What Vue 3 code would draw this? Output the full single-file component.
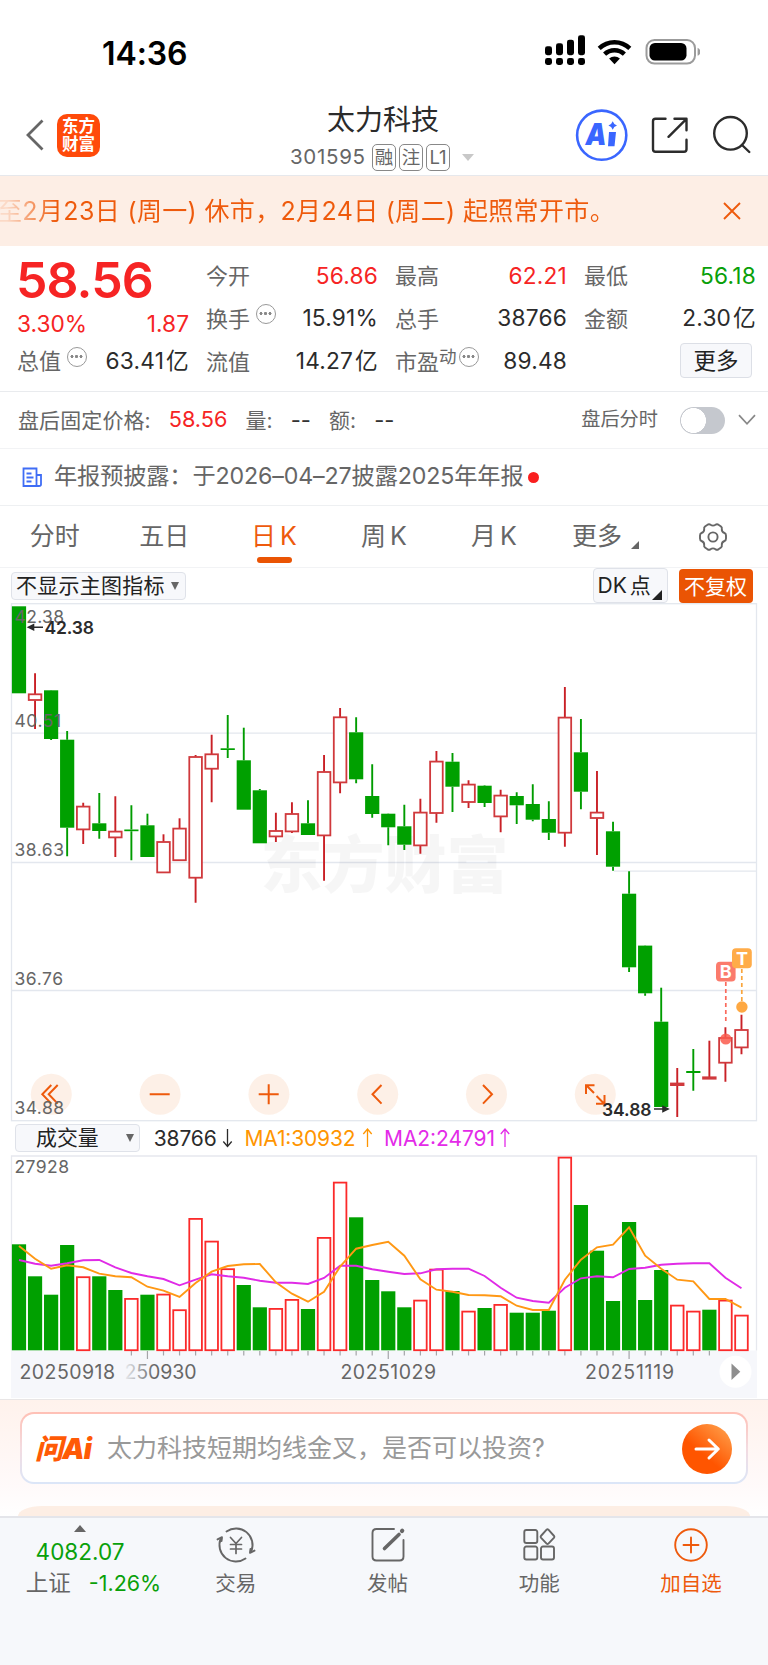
<template>
  <div class="page">
    <!-- Status bar -->
    <div class="status-bar">
      <span class="clock">14:36</span>
      <svg class="status-icons" width="160" height="40" viewBox="540 33 160 40">
        <g fill="#000">
          <rect v-for="(h, i) in [9, 12, 15.5, 20]" :key="'s' + i" :x="545 + i * 11" :y="59.6 - h - 4.4" width="7" :height="h" rx="2.4" />
          <rect v-for="i in 4" :key="'d' + i" :x="534 + i * 11" y="58" width="7" height="7" rx="2.4" />
          <path d="M614.5 64.2l-5.4-5.6a8 8 0 0 1 10.8 0z" />
        </g>
        <g fill="none" stroke="#000" stroke-width="4.4">
          <path d="M599.2 48.4a22 22 0 0 1 30.6 0" />
          <path d="M604.6 54.2a14.2 14.2 0 0 1 19.8 0" />
        </g>
        <rect x="646.5" y="40" width="48.5" height="23.6" rx="8" fill="none" stroke="#9b9b9b" stroke-width="2" />
        <rect x="649.5" y="43" width="37" height="17.6" rx="5.4" fill="#000" />
        <path d="M697.6 47.8q2.8 1.2 2.8 4t-2.8 4z" fill="#9b9b9b" />
      </svg>
    </div>

    <!-- Header -->
    <header class="header">
      <svg class="back" width="20" height="32" viewBox="0 0 20 32">
        <path d="M17.5 1.5L3 16l14.5 14.5" fill="none" stroke="#666" stroke-width="2.8" />
      </svg>
      <div class="app-logo"><span>东方</span><span>财富</span></div>
      <div class="stock">
        <div class="stock-name">太力科技</div>
        <div class="stock-code">
          <span class="code">301595</span>
          <span class="tag">融</span>
          <span class="tag">注</span>
          <span class="tag">L1</span>
          <i class="drop"></i>
        </div>
      </div>
      <svg class="header-icons" width="192" height="60" viewBox="570 105 192 60" fill="none">
        <circle cx="601.7" cy="135.2" r="24.6" stroke="#3a66ff" stroke-width="2.6" />
        <text x="585.5" y="145" class="ai-mark" textLength="21" lengthAdjust="spacingAndGlyphs">A</text>
        <path d="M609 132h7l-1.500 14.200h-6.500zM612.700 121.300q1 3.200 4.300 4.200-3.300 1-4.300 4.200-1-3.200-4.300-4.200 3.300-1 4.300-4.200z" fill="#3a66ff" />
        <g stroke="#2c2c2c" stroke-width="2.400" stroke-linecap="round" stroke-linejoin="round">
          <path d="M665.5 118.800h-10q-2.500 0-2.500 2.500v28q0 2.500 2.500 2.500h28.500q2.500 0 2.500-2.500v-9.500" />
          <path d="M674.5 118.800h12v11.500M686 119.300l-17.500 17.500" />
          <circle cx="730.5" cy="133.3" r="16.3" />
          <path d="M742 145l7.300 7" />
        </g>
      </svg>
    </header>

    <!-- Scrolling notice -->
    <div class="notice">
      <span class="notice-text">至2月23日 (周一) 休市，2月24日 (周二) 起照常开市。</span>
      <svg class="notice-close" width="18" height="18" viewBox="0 0 18 18">
        <path d="M1 1l16 16M17 1L1 17" stroke="#ee5a0c" stroke-width="1.9" />
      </svg>
    </div>

    <!-- Quote -->
    <section class="quote">
      <div class="quote-col first">
        <div class="price red">58.56</div>
        <div class="cell change red"><span>3.30%</span><span>1.87</span></div>
        <div class="cell">
          <span class="label">总值<i class="dots"></i></span><span class="value">63.41<em>亿</em></span>
        </div>
      </div>
      <div v-for="(col, i) in quoteCols" :key="i" class="quote-col">
        <div v-for="item in col" :key="item.label" class="cell">
          <span class="label">{{ item.label }}<sup v-if="item.sup">{{ item.sup }}</sup><i v-if="item.info" class="dots" :class="{ tight: item.sup }"></i></span>
          <span class="value" :class="item.color">{{ item.value }}<em v-if="item.unit">{{ item.unit }}</em></span>
        </div>
        <div v-if="i === 2" class="cell more-cell"><button class="more-btn">更多</button></div>
      </div>
    </section>

    <!-- After-hours -->
    <div class="after-hours">
      <span class="ah-label">盘后固定价格:</span>
      <span class="ah-price red">58.56</span>
      <span class="ah-label">量:</span>
      <span class="ah-dash">--</span>
      <span class="ah-label">额:</span>
      <span class="ah-dash">--</span>
      <span class="ah-min">盘后分时</span>
      <span class="toggle"></span>
      <svg width="18" height="12" viewBox="0 0 18 12">
        <path d="M1 1.200l8 8.600 8-8.600" fill="none" stroke="#888" stroke-width="1.7" />
      </svg>
    </div>

    <div class="news">
      <svg width="21" height="21" viewBox="0 0 21 21" fill="none" stroke="#3f6df5" stroke-width="1.8">
        <path d="M1.500 1.500h13v17.500h-13zM14.500 8h4.500v9.500q0 1.500-2 1.500h-4M4.500 6.500h5M4.500 10.500h7M4.500 14.500h5" />
      </svg>
      <span class="news-text">年报预披露：于2026–04–27披露2025年年报</span>
      <i class="red-dot"></i>
    </div>

    <!-- Period tabs -->
    <nav class="tabs">
      <span v-for="tab in tabs" :key="tab.text" class="tab" :class="{ active: tab.active }">
        {{ tab.text }}<b v-if="tab.letter">{{ tab.letter }}</b><i v-if="tab.corner" class="corner"></i>
      </span>
      <svg class="gear" width="30" height="30" viewBox="-15 -15 30 30" fill="none" stroke="#666" stroke-width="1.9" stroke-linejoin="round">
        <path d="M-5.500-12.200Q-4-13.500-2.500-12.200Q0-10.500 2.500-12.200Q4-13.500 5.500-12.200L8-10.500Q9.200-9.500 8.800-8Q8.600-5 11.500-4Q13-3.500 13-1.500V1.500Q13 3.500 11.500 4Q8.600 5 8.800 8Q9.200 9.500 8 10.500L5.500 12.200Q4 13.500 2.500 12.200Q0 10.500-2.500 12.200Q-4 13.500-5.500 12.200L-8 10.500Q-9.200 9.500-8.800 8Q-8.600 5-11.500 4Q-13 3.500-13 1.500V-1.500Q-13-3.500-11.500-4Q-8.600-5-8.800-8Q-9.200-9.500-8-10.500Z" />
        <circle r="4.6" />
      </svg>
    </nav>

    <!-- Chart toolbar -->
    <div class="toolbar">
      <div class="select main-select">不显示主图指标<i class="caret"></i></div>
      <div class="select dk">DK<span>点</span><i class="corner dark"></i></div>
      <div class="adjust">不复权</div>
    </div>

    <!-- K line chart -->
    <svg class="kline" width="768" height="519" viewBox="0 603 768 519">
      <g fill="none" stroke="#e3e7ee" stroke-width="1.3">
        <rect x="11.5" y="603.7" width="745" height="517" />
        <path d="M11.500 733.200H756.500M11.500 862.500H756.500M11.500 990.500H756.500M614 871.200H756.500" />
      </g>
      <text x="260.5" y="887.5" class="watermark" textLength="248">东方财富</text>
      <g v-for="(c, i) in candles" :key="i">
        <path :d="`M${barX(i)} ${c[1]}V${c[2]}M${barX(i)} ${c[3]}V${c[4]}`" :stroke="c[0] ? '#c92026' : '#009c00'" stroke-width="1.9" />
        <rect v-if="c[0]" :x="barX(i) - 6.3" :y="c[2] + 0.3" width="12.6" :height="Math.max(c[3] - c[2] - 0.6, 1)" fill="#fff" stroke="#d0393c" stroke-width="1.8" />
        <rect v-else :x="barX(i) - 7.1" :y="c[2]" width="14.2" :height="Math.max(c[3] - c[2], 1.7)" fill="#00a000" />
      </g>

      <!-- Chart controls -->
      <g v-for="n in 6" :key="'c' + n">
        <circle :cx="51.3 + (n - 1) * 108.8" cy="1094.3" r="20.5" fill="#fdeee4" fill-opacity="0.9" />
      </g>
      <g fill="none" stroke="#ee5a0c" stroke-width="2">
        <path d="M51.300 1085l-9 9.300 9 9.300M57.700 1085l-9 9.300 9 9.300" />
        <path d="M149.700 1094.300h20M258.700 1094.300h20M268.700 1084.300v20" />
        <path d="M381.500 1085l-9 9.300 9 9.300M483 1085l9 9.300-9 9.300" />
        <path d="M594 1093l-7.500-7.500M586 1094v-8.800h8.500M596.500 1096l7.500 7.500M604.500 1095v8.800h-8.500" />
      </g>

      <g class="axis-label">
        <text x="14.5" y="623.2" textLength="49.5">42.38</text>
        <text x="14.5" y="727.3" textLength="46.5">40.51</text>
        <text x="14.5" y="856.3" textLength="49.5">38.63</text>
        <text x="14.5" y="985.4" textLength="48.5">36.76</text>
        <text x="14.500" y="1114.2" textLength="49.5">34.88</text>
      </g>
      <g class="extreme">
        <text x="44.5" y="634" textLength="49.5">42.38</text>
        <text x="602" y="1116.3" textLength="49.5">34.88</text>
      </g>
      <g stroke="#2b2b2b" stroke-width="1.600" fill="#2b2b2b">
        <path d="M32 627.300H43M654 1109H664" />
        <path d="M28.500 627.300l5-2.500v5zM668 1109l-5-2.500v5z" />
      </g>

      <!-- Signals -->
      <g fill="none" stroke-width="1.700" stroke-dasharray="4 3">
        <path d="M725.800 982V1021" stroke="#fa6a5c" />
        <path d="M741.800 969V1002" stroke="#f9a53c" />
      </g>
      <circle cx="725.8" cy="1039" r="5.6" fill="#fa5a4c" fill-opacity="0.85" />
      <circle cx="741.9" cy="1007" r="5.7" fill="#fea842" />
      <rect x="716" y="961.8" width="19.6" height="19.6" rx="4" fill="#fb7b6c" />
      <rect x="732" y="948.3" width="19.8" height="20" rx="4" fill="#ffac49" />
      <text x="725.8" y="978.3" class="flag">B</text>
      <text x="742" y="965" class="flag">T</text>
    </svg>

    <!-- Indicator row -->
    <div class="indicator">
      <div class="select vol-select">成交量<i class="caret"></i></div>
      <svg width="370" height="32" viewBox="150 1123 370 32" class="ind-values">
        <text x="153.7" y="1147" fill="#2b2b2b" textLength="63">38766</text>
        <text x="244.5" y="1147" fill="#ff9500" textLength="111">MA1:30932</text>
        <text x="384" y="1147" fill="#e32be8" textLength="111">MA2:24791</text>
        <g fill="none" stroke-width="1.3">
          <path d="M227.500 1130v17M223.300 1142.500l4.200 5 4.200-5" stroke="#2b2b2b" />
          <path d="M367.500 1148v-17.500M363.300 1135l4.200-5 4.200 5" stroke="#ff9500" />
          <path d="M505 1148v-17.500M500.800 1135l4.200-5 4.200 5" stroke="#e32be8" />
        </g>
      </svg>
    </div>

    <!-- Volume chart -->
    <svg class="volume" width="768" height="243" viewBox="0 1155 768 243">
      <rect x="11" y="1350.5" width="746" height="48" fill="#f6f7fb" />
      <path d="M11.500 1350.500V1156H756.500V1350.500" fill="none" stroke="#e6e8ee" stroke-width="1.3" />
      <text x="14.5" y="1173.3" class="axis-label" textLength="54.5">27928</text>
      <g v-for="(top, i) in volumes" :key="i">
        <rect v-if="isUp(i)" :x="barX(i) - 6.3" :y="top + 0.9" width="12.6" :height="1349.3 - top" fill="#fff" stroke="#fb2a2a" stroke-width="1.8" />
        <rect v-else :x="barX(i) - 7.1" :y="top" width="14.2" :height="1350.3 - top" fill="#00a000" />
      </g>
      <polyline :points="linePoints(ma2)" fill="none" stroke="#e02be6" stroke-width="1.9" />
      <polyline :points="linePoints(ma1)" fill="none" stroke="#ff9814" stroke-width="1.9" />
      <path v-for="i in 37" :key="'t' + i" :d="`M${barX(i + 6)} 1351v${majors.includes(i + 6) ? 8 : 4.5}`" stroke="#a4a4a8" stroke-width="1.2" />
      <defs>
        <linearGradient id="dateFade" gradientUnits="userSpaceOnUse" x1="124" x2="154" y1="0" y2="0">
          <stop offset="0" stop-color="#666" stop-opacity="0.050" />
          <stop offset="1" stop-color="#666" />
        </linearGradient>
      </defs>
      <g class="date">
        <text x="19.5" y="1378.6" textLength="95.5">20250918</text>
        <text x="124.5" y="1378.6" textLength="72" fill="url(#dateFade)">250930</text>
        <text x="340.5" y="1378.6" textLength="95.5">20251029</text>
        <text x="585" y="1378.6" textLength="89">20251119</text>
      </g>
      <circle cx="735.5" cy="1371.7" r="16" fill="#fff" />
      <path d="M731.500 1363.500v16.400l8.800-8.200z" fill="#8e8e8e" />
    </svg>

    <!-- Ask AI -->
    <section class="ask">
      <div class="ask-box">
        <span class="ask-logo">问Ai</span>
        <span class="ask-text">太力科技短期均线金叉，是否可以投资?</span>
        <span class="ask-go">
          <svg width="28" height="24" viewBox="0 0 28 24" fill="none" stroke="#fff" stroke-width="3" stroke-linecap="round" stroke-linejoin="round">
            <path d="M3 12h22M16 3l9.300 9-9.300 9" />
          </svg>
        </span>
      </div>
      <div class="peek"></div>
    </section>

    <!-- Bottom bar -->
    <footer class="bottom">
      <div class="index">
        <i class="up"></i>
        <div class="index-value">4082.07</div>
        <div class="index-row"><span>上证</span><span class="index-pct">-1.26%</span></div>
      </div>
      <div class="action">
        <svg width="40" height="36" viewBox="-20 -18 40 36" fill="none" stroke="#666" stroke-width="1.9" stroke-linecap="round" stroke-linejoin="round">
          <path d="M-9.500-13.500A16.500 16.500 0 0 1 15.200 6.500M9.500 13.500A16.500 16.500 0 0 1-15.200-6.500" />
          <path d="M14 7.800l4.500-2.200M-14-7.800l-4.500 2.200M14 7.500l.500-3.500M-14-7.500l-.500 3.500" />
          <path d="M-5.500-7.500L0-1.500l5.500-6M0-1.500V8.500M-5.500-.500h11M-5.500 4h11" stroke-width="1.7" />
        </svg>
        <span>交易</span>
      </div>
      <div class="action">
        <svg width="40" height="36" viewBox="-20 -18 40 36" fill="none" stroke="#666" stroke-width="1.9" stroke-linecap="round">
          <path d="M6-16h-17.500q-4 0-4 4V11.500q0 4 4 4H11.500q4 0 4-4V-5" />
          <path d="M-3.500 3.500L11-10.500" stroke-width="3.6" />
          <path d="M14-14l.200-.200" stroke-width="4.2" />
        </svg>
        <span>发帖</span>
      </div>
      <div class="action">
        <svg width="40" height="36" viewBox="-20 -18 40 36" fill="none" stroke="#666" stroke-width="1.9" stroke-linejoin="round">
          <rect x="-14.7" y="-15" width="13" height="13" rx="2" />
          <rect x="-14.7" y="1.5" width="13" height="13" rx="2" />
          <rect x="2" y="1.5" width="13" height="13" rx="2" />
          <path d="M7.600-15.300q.900-.800 1.800 0l5.700 6.300q.600.800 0 1.600l-5.700 6q-.900.800-1.800 0l-5.700-6q-.600-.800 0-1.600z" />
        </svg>
        <span>功能</span>
      </div>
      <div class="action add">
        <svg width="40" height="36" viewBox="-20 -18 40 36" fill="none" stroke="#ee5a0c" stroke-width="1.9" stroke-linecap="round">
          <circle r="15.8" />
          <path d="M-7.500 0h15M0-7.500v15" />
        </svg>
        <span>加自选</span>
      </div>
    </footer>
  </div>
</template>

<script setup>
const quoteCols = [
  [
    { label: '今开', value: '56.86', color: 'red' },
    { label: '换手', value: '15.91%', info: true },
    { label: '流值', value: '14.27', unit: '亿' }
  ],
  [
    { label: '最高', value: '62.21', color: 'red' },
    { label: '总手', value: '38766' },
    { label: '市盈', value: '89.48', sup: '动', info: true }
  ],
  [
    { label: '最低', value: '56.18', color: 'green' },
    { label: '金额', value: '2.30', unit: '亿' }
  ]
]

const tabs = [
  { text: '分时' },
  { text: '五日' },
  { text: '日', letter: 'K', active: true },
  { text: '周', letter: 'K' },
  { text: '月', letter: 'K' },
  { text: '更多', corner: true }
]

// [up, high, body top, body bottom, low]
const candles = [
  [0, 606.3, 606.3, 693.3, 693.3], [1, 673.3, 694, 700.3, 729], [0, 690, 690.3, 739, 740],
  [0, 731, 739.7, 827.7, 856.3], [1, 802.7, 806.3, 829.7, 844], [0, 793, 823.3, 831, 838.7],
  [1, 796.3, 831.3, 837.7, 857], [0, 805.3, 829.5, 831.2, 860.3], [0, 813.7, 825.3, 857, 857],
  [1, 834.3, 841.7, 872.7, 872.7], [1, 818.3, 828.3, 860.5, 860.5], [1, 755, 756.7, 878, 902.7],
  [1, 734.7, 754, 769, 802.3], [0, 715, 748.3, 750, 758], [0, 727.7, 760.3, 809.7, 809.7],
  [0, 789, 790.3, 843.3, 843.3], [1, 812.7, 830.7, 836.7, 842], [1, 802.3, 813.7, 831.7, 833],
  [0, 800.3, 823.3, 835, 835], [1, 755, 771.7, 835.7, 880.7], [1, 708, 717, 782.7, 793.3],
  [0, 717.3, 732.3, 779.3, 783.3], [0, 764.3, 796, 814, 817.7], [0, 813.5, 813.7, 827.3, 845.3],
  [0, 804.7, 826.3, 844.7, 850], [1, 798.7, 812.3, 845.7, 853.7], [1, 751, 761.3, 813.3, 822.7],
  [0, 753, 761.7, 786.7, 812], [1, 780.3, 784.3, 802.3, 808], [0, 785.3, 785.7, 803, 807],
  [1, 789.7, 795.3, 816.7, 832.3], [0, 792.3, 796, 805.3, 824], [0, 784.3, 804, 819.7, 821.3],
  [0, 801.3, 819, 832.7, 840], [1, 687, 717.3, 833, 846.7], [0, 719, 752.3, 791.7, 809.3],
  [1, 771, 812.3, 818.3, 855], [0, 821.7, 831.3, 866.7, 870.7], [0, 871.3, 893.7, 967.3, 972],
  [0, 945.3, 945.6, 993.3, 995.7], [0, 987.7, 1021.7, 1107, 1107], [1, 1068, 1083.2, 1085.4, 1117],
  [0, 1049, 1071, 1073, 1090.7], [1, 1040.7, 1077, 1079, 1079], [1, 1027.3, 1037.7, 1063, 1081.7],
  [1, 1014.7, 1029.7, 1047.7, 1054.3]
]

const volumes = [
  1244.3, 1276.3, 1294.7, 1245, 1276.3, 1276.3, 1290, 1298, 1294.7, 1293.7, 1309.3, 1218,
  1240.7, 1268.3, 1285, 1307.3, 1308, 1299, 1309, 1237, 1181.7, 1217.3, 1280, 1291.3,
  1307.3, 1299.7, 1268.7, 1291, 1310.7, 1308, 1304, 1312.7, 1312.7, 1310.7, 1156.7, 1205,
  1250.7, 1301, 1222, 1300, 1270, 1304.7, 1310.7, 1309.7, 1299.7, 1314.7
]
// hollow red volume bars
const upVolumes = [4, 7, 9, 10, 11, 12, 13, 16, 17, 19, 20, 25, 26, 28, 30, 34, 41, 42, 44, 45]

const ma1 = [
  378, 416, 446, 436, 442, 461, 469, 472, 500, 512, 531, 489, 455, 438, 433, 432, 487, 521, 545, 515, 440, 386, 375,
  365, 407, 478, 509, 515, 525, 526, 529, 557, 570, 570, 479, 419, 382, 374, 322, 407, 446, 479, 484, 537, 537, 563
]
const ma2 = [
  420, 431, 437, 430, 421, 420, 442, 459, 469, 477, 496, 479, 463, 469, 473, 482, 488, 488, 492, 474, 437, 437, 448,
  455, 462, 460, 448, 446, 446, 468, 503, 533, 543, 548, 503, 475, 469, 472, 447, 443, 434, 431, 430, 430, 473, 505
]
const majors = [8, 23, 38]

const barX = (i) => +(19 + i * 16.055).toFixed(2)
const isUp = (i) => upVolumes.includes(i)
const linePoints = (list) => list.map((v, i) => `${barX(i)},${(1120 + v / 3).toFixed(1)}`).join(' ')
</script>

<style>
body {
  margin: 0;
  background: #fff;
}
</style>

<style scoped>
.page {
  width: 768px;
  height: 1665px;
  overflow: hidden;
  display: flex;
  flex-direction: column;
  background: #fff;
  color: #2b2b2b;
  font-family: Inter, "Noto Sans CJK SC", sans-serif;
  font-size: 22px;
  line-height: 1;
}

.page > * {
  flex-shrink: 0;
  box-sizing: border-box;
}

i,
em {
  font-style: normal;
}

.red {
  color: #f62424 !important;
}

.green {
  color: #09a009 !important;
}

/* status bar */
.status-bar {
  height: 95px;
  display: flex;
  align-items: flex-start;
  justify-content: space-between;
  padding: 33px 68px 0 102px;
}

.clock {
  font-size: 32px;
  line-height: 41px;
  font-weight: 600;
  color: #000;
  letter-spacing: -0.1px;
}

/* header */
.header {
  height: 81px;
  display: flex;
  align-items: center;
  padding: 0 6px 0 25px;
  border-bottom: 1.5px solid #e6e8ec;
}

.app-logo {
  width: 43px;
  height: 43px;
  margin-left: 12px;
  border-radius: 10px;
  background: #ff4a0a;
  color: #fff;
  display: flex;
  flex-direction: column;
  align-items: center;
  justify-content: center;
  font-size: 16.5px;
  line-height: 18px;
  font-weight: 700;
}

.stock {
  margin-left: 190px;
  width: 190px;
  padding-top: 7px;
}

.stock-name {
  padding-left: 37px;
  font-size: 28px;
  line-height: 38px;
  color: #2b2b2b;
}

.stock-code {
  display: flex;
  align-items: center;
  color: #666;
  gap: 3px;
  height: 37px;
}

.code {
  font-size: 20.5px;
  letter-spacing: 0.7px;
  width: 79px;
}

.tag {
  width: 24px;
  height: 27px;
  box-sizing: border-box;
  border: 1.5px solid #888;
  border-radius: 5px;
  font-size: 18.5px;
  line-height: 24px;
  display: flex;
  justify-content: center;
}

.drop {
  margin-left: 9px;
  border: 6.5px solid transparent;
  border-top: 7px solid #c8c8c8;
  border-bottom: 0;
}

.header-icons {
  margin-left: auto;
}

.ai-mark {
  font: italic 900 30px Inter, sans-serif;
  fill: #3a66ff;
}

/* notice */
.notice {
  height: 70px;
  display: flex;
  align-items: center;
  justify-content: space-between;
  padding-right: 27px;
  background: #fdeee5;
}

.notice-text {
  margin-left: -3px;
  font-size: 25px;
  line-height: 40px;
  letter-spacing: 0.35px;
  white-space: nowrap;
  color: transparent;
  background: linear-gradient(90deg, #fbd9c6 10px, #ee5a0c 60px);
  -webkit-background-clip: text;
  background-clip: text;
}

/* quote */
.quote {
  height: 145.5px;
  display: flex;
  gap: 17px;
  padding: 8.8px 12px 0 17px;
  border-bottom: 1.5px solid #e9ebee;
}

.quote-col {
  width: 172px;
}

.cell {
  height: 42.7px;
  display: flex;
  align-items: center;
  justify-content: space-between;
  font-size: 22px;
}

.first .cell {
  height: 29px;
}

.first .change {
  height: 44px;
  font-size: 22.7px;
}

.price {
  height: 48px;
  font-size: 50px;
  line-height: 50px;
  font-weight: 600;
  letter-spacing: -0.9px;
  margin-left: -1px;
}

.label {
  color: #666;
  display: flex;
  align-items: center;
}

.label sup {
  font-size: 17.5px;
  line-height: 17px;
  margin-top: -11px;
}

.value {
  font-size: 22.7px;
  letter-spacing: 0.2px;
  display: flex;
  align-items: center;
}

.value em {
  margin-left: 2px;
}

.dots {
  width: 20px;
  height: 20px;
  box-sizing: border-box;
  margin: -9px 0 0 6px;
  border: 1.5px solid #999;
  border-radius: 50%;
  background:
    radial-gradient(circle at 4px 8.5px, #888 1.3px, transparent 1.8px),
    radial-gradient(circle at 8.5px 8.5px, #888 1.3px, transparent 1.8px),
    radial-gradient(circle at 13px 8.5px, #888 1.3px, transparent 1.8px);
}

.dots.tight {
  margin-left: 2px;
}

.more-cell {
  justify-content: flex-end;
}

.more-btn {
  width: 72px;
  height: 35px;
  margin: -2px 4px 0 0;
  padding: 0;
  border: 1.5px solid #dcdfe6;
  border-radius: 4px;
  background: #f7f8fb;
  color: #222;
  font: 22.5px/30px Inter, "Noto Sans CJK SC", sans-serif;
}

/* after hours */
.after-hours {
  height: 57px;
  display: flex;
  align-items: center;
  padding: 1px 12px 0 18px;
  border-bottom: 1.5px solid #f2f3f5;
  color: #666;
}

.ah-label {
  font-size: 21px;
  letter-spacing: 0.1px;
}

.ah-price {
  margin: 0 18px 0 18px;
  font-size: 21.7px;
}

.ah-dash {
  margin: 0 18px;
  color: #333;
}

.ah-min {
  margin-left: auto;
  font-size: 19.2px;
}

.toggle {
  width: 45px;
  height: 27px;
  margin: 0 13px 0 22px;
  border-radius: 14px;
  background: radial-gradient(circle at 13.5px 13.5px, #fff 12.2px, transparent 12.7px), #c5c8ce;
}

/* news */
.news {
  height: 57px;
  display: flex;
  align-items: center;
  padding: 1px 0 0 22px;
  color: #666;
  border-bottom: 1.5px solid #eef0f2;
}

.news-text {
  margin-left: 11px;
  font-size: 23.2px;
  letter-spacing: -0.12px;
}

.red-dot {
  width: 11px;
  height: 11px;
  margin-left: 5px;
  border-radius: 50%;
  background: #f91f1f;
}

/* tabs */
.tabs {
  height: 62px;
  display: grid;
  grid-template-columns: 109.5px 109.5px 110px 110px 110px 110px 1fr;
  align-items: center;
  border-bottom: 1.5px solid #f2f3f5;
}

.tab {
  position: relative;
  height: 62px;
  display: flex;
  align-items: center;
  justify-content: center;
  font-size: 25px;
  color: #666;
}

.tab b {
  margin-left: 4px;
  font-weight: 400;
}

.tab.active {
  color: #ee5a0c;
}

.tab.active::after {
  content: "";
  position: absolute;
  left: 50%;
  bottom: 5px;
  width: 35px;
  height: 5.5px;
  margin-left: -17.5px;
  border-radius: 3px;
  background: #ea5404;
}

.tab .corner {
  margin: 17px -3px 0 9px;
}

.corner {
  border-left: 8px solid transparent;
  border-bottom: 8px solid #666;
}

.gear {
  margin-left: 39px;
}

/* toolbar */
.toolbar {
  height: 36px;
  display: flex;
  align-items: center;
  padding: 0 15.5px 0 11px;
}

.select {
  box-sizing: border-box;
  display: flex;
  align-items: center;
  border: 1.5px solid #dfe2e9;
  border-radius: 4px;
  background: #f7f8fb;
  font-size: 21px;
  color: #222;
}

.main-select {
  width: 175px;
  height: 28px;
  padding-left: 4px;
  letter-spacing: 0.25px;
}

.caret {
  margin-left: 6px;
  border: 4.5px solid transparent;
  border-top: 8px solid #666;
  border-bottom: 0;
}

.dk {
  width: 75px;
  height: 35px;
  margin-left: auto;
  padding-left: 4px;
}

.dk span {
  margin-left: 3px;
}

.corner.dark {
  margin: 18px 0 0 1px;
  border-left-width: 10px;
  border-bottom: 10px solid #222;
}

.adjust {
  width: 74px;
  height: 34px;
  margin-left: 11px;
  border-radius: 4px;
  background: #ea5404;
  color: #fff;
  font-size: 21px;
  line-height: 35px;
  text-align: center;
}

/* charts */
.kline {
  margin-top: -1px;
}

.watermark {
  font: 900 62px "Noto Sans CJK SC", sans-serif;
  fill: #000;
  fill-opacity: 0.035;
}

.axis-label {
  font-size: 17.5px;
  fill: #666;
}

.extreme {
  font-size: 17.5px;
  font-weight: 600;
  fill: #2b2b2b;
}

.flag {
  font-size: 18px;
  font-weight: 700;
  fill: #fff;
  text-anchor: middle;
}

.indicator {
  height: 33px;
  display: flex;
  align-items: center;
  padding-left: 15px;
}

.vol-select {
  width: 125px;
  height: 28px;
  padding-left: 20px;
  font-size: 20.9px;
}

.vol-select .caret {
  margin-left: 27px;
}

.ind-values {
  margin-left: 10px;
  font-size: 21px;
}

.date {
  font-size: 19.5px;
  fill: #666;
}

/* ask */
.ask {
  height: 116.5px;
  margin-top: 1.5px;
  display: flex;
  flex-direction: column;
  padding: 12px 20px 0;
  border-top: 1.5px solid #e9e6e6;
  background: linear-gradient(#fff2ec, #fffafa 75%, #fff);
}

.ask-box {
  box-sizing: border-box;
  height: 72px;
  display: flex;
  align-items: center;
  flex-shrink: 0;
  padding: 1px 14px 0 13px;
  border: 2px solid transparent;
  border-radius: 14px;
  background:
    linear-gradient(#fff, #fff) padding-box,
    linear-gradient(#ffc0b5, #f3dbe0 50%, #dbe6f8) border-box;
}

.ask-logo {
  width: 60px;
  font-size: 28px;
  font-weight: 900;
  font-style: italic;
  letter-spacing: -0.7px;
  color: #ff5a05;
  white-space: nowrap;
}

.ask-text {
  margin-left: 12px;
  font-size: 25px;
  color: #999;
}

.ask-go {
  width: 50px;
  height: 50px;
  margin-left: auto;
  border-radius: 50%;
  display: flex;
  align-items: center;
  justify-content: center;
  background: linear-gradient(220deg, #ff9a45 10%, #ff5500 60%);
}

.peek {
  height: 10px;
  margin: 22px -2px 0;
  border-radius: 24px 24px 0 0 / 10px 10px 0 0;
  background: #fdeee4;
}

/* bottom bar */
.bottom {
  flex: 1;
  display: flex;
  border-top: 2px solid #e4e5ea;
  background: #f6f8fb;
  color: #666;
}

.index {
  width: 160px;
  display: flex;
  flex-direction: column;
  align-items: center;
  padding-top: 7px;
}

.up {
  border: 6px solid transparent;
  border-bottom: 7px solid #666;
  border-top: 0;
}

.index-value {
  margin-top: 7px;
  font-size: 22.5px;
  line-height: 26px;
  color: #09a009;
}

.index-row {
  display: flex;
  gap: 18px;
  margin-top: 6px;
  margin-left: 26px;
  margin-right: -1px;
  font-size: 22.5px;
  line-height: 24px;
  white-space: nowrap;
}

.index-row span {
  flex-shrink: 0;
}

.index-pct {
  font-size: 21.5px;
  color: #09a009;
}

.index-row,
.index-value {
  align-self: center;
}

.index-row {
  margin-left: 26px;
}

.action {
  width: 151.7px;
  display: flex;
  flex-direction: column;
  align-items: center;
  padding-top: 9px;
}

.action span {
  margin-top: 9px;
  font-size: 20.5px;
  line-height: 24px;
}

.add {
  color: #ee5a0c;
}
</style>
